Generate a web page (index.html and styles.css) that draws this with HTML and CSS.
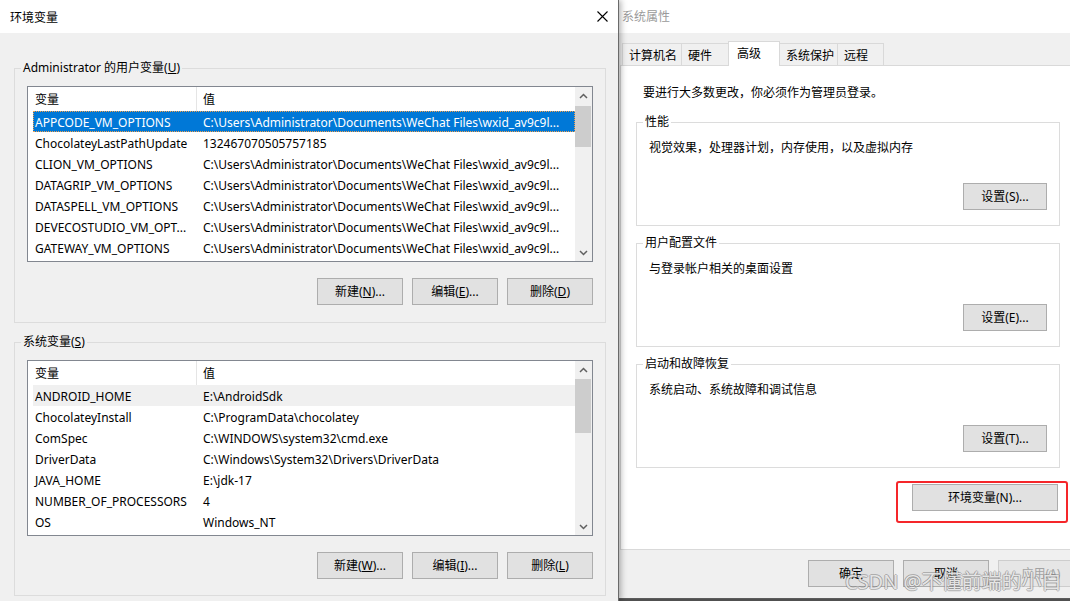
FILE: index.html
```html
<!DOCTYPE html>
<html>
<head>
    <meta charset="utf-8">
    <title>环境变量</title>
    <link rel="stylesheet" href="styles.css">
</head>
<body>
<div class="desktop">
    <div class="dialog env">
        <div class="titlebar">
            <span class="title">环境变量</span>
            <svg class="close-icon" width="11" height="11" viewBox="0 0 11 11"><path d="M0.5 0.5 L10.5 10.5 M10.5 0.5 L0.5 10.5" stroke="#000" stroke-width="1.1" fill="none"/></svg>
        </div>
        <div class="env-body">
            <fieldset class="group">
                <legend>Administrator 的用户变量(<u>U</u>)</legend>
                <div class="listview">
                    <div class="list-rows">
                        <div class="list-head"><span class="col-name">变量</span><span class="col-value">值</span></div>
                        <div class="list-row selected"><span class="col-name">APPCODE_VM_OPTIONS</span><span class="col-value">C:\Users\Administrator\Documents\WeChat Files\wxid_av9c9l...</span></div>
                        <div class="list-row"><span class="col-name">ChocolateyLastPathUpdate</span><span class="col-value">132467070505757185</span></div>
                        <div class="list-row"><span class="col-name">CLION_VM_OPTIONS</span><span class="col-value">C:\Users\Administrator\Documents\WeChat Files\wxid_av9c9l...</span></div>
                        <div class="list-row"><span class="col-name">DATAGRIP_VM_OPTIONS</span><span class="col-value">C:\Users\Administrator\Documents\WeChat Files\wxid_av9c9l...</span></div>
                        <div class="list-row"><span class="col-name">DATASPELL_VM_OPTIONS</span><span class="col-value">C:\Users\Administrator\Documents\WeChat Files\wxid_av9c9l...</span></div>
                        <div class="list-row"><span class="col-name">DEVECOSTUDIO_VM_OPT...</span><span class="col-value">C:\Users\Administrator\Documents\WeChat Files\wxid_av9c9l...</span></div>
                        <div class="list-row"><span class="col-name">GATEWAY_VM_OPTIONS</span><span class="col-value">C:\Users\Administrator\Documents\WeChat Files\wxid_av9c9l...</span></div>
                    </div>
                    <div class="scrollbar">
                        <div class="arrow"><svg width="9" height="6" viewBox="0 0 9 6"><path d="M1 5 L4.5 1.5 L8 5" fill="none" stroke="#606060" stroke-width="1.5"/></svg></div>
                        <div class="track"><div class="thumb thumb-user"></div></div>
                        <div class="arrow"><svg width="9" height="6" viewBox="0 0 9 6"><path d="M1 1 L4.5 4.5 L8 1" fill="none" stroke="#606060" stroke-width="1.5"/></svg></div>
                    </div>
                </div>
                <div class="btn-row">
                    <button class="btn">新建(<u>N</u>)...</button>
                    <button class="btn">编辑(<u>E</u>)...</button>
                    <button class="btn">删除(<u>D</u>)</button>
                </div>
            </fieldset>

            <fieldset class="group sys-vars">
                <legend>系统变量(<u>S</u>)</legend>
                <div class="listview">
                    <div class="list-rows">
                        <div class="list-head"><span class="col-name">变量</span><span class="col-value">值</span></div>
                        <div class="list-row hover"><span class="col-name">ANDROID_HOME</span><span class="col-value">E:\AndroidSdk</span></div>
                        <div class="list-row"><span class="col-name">ChocolateyInstall</span><span class="col-value">C:\ProgramData\chocolatey</span></div>
                        <div class="list-row"><span class="col-name">ComSpec</span><span class="col-value">C:\WINDOWS\system32\cmd.exe</span></div>
                        <div class="list-row"><span class="col-name">DriverData</span><span class="col-value">C:\Windows\System32\Drivers\DriverData</span></div>
                        <div class="list-row"><span class="col-name">JAVA_HOME</span><span class="col-value">E:\jdk-17</span></div>
                        <div class="list-row"><span class="col-name">NUMBER_OF_PROCESSORS</span><span class="col-value">4</span></div>
                        <div class="list-row"><span class="col-name">OS</span><span class="col-value">Windows_NT</span></div>
                    </div>
                    <div class="scrollbar">
                        <div class="arrow"><svg width="9" height="6" viewBox="0 0 9 6"><path d="M1 5 L4.5 1.5 L8 5" fill="none" stroke="#606060" stroke-width="1.5"/></svg></div>
                        <div class="track"><div class="thumb thumb-sys"></div></div>
                        <div class="arrow"><svg width="9" height="6" viewBox="0 0 9 6"><path d="M1 1 L4.5 4.5 L8 1" fill="none" stroke="#606060" stroke-width="1.5"/></svg></div>
                    </div>
                </div>
                <div class="btn-row">
                    <button class="btn">新建(<u>W</u>)...</button>
                    <button class="btn">编辑(<u>I</u>)...</button>
                    <button class="btn">删除(<u>L</u>)</button>
                </div>
            </fieldset>
        </div>
    </div>

    <div class="dialog sys">
        <div class="titlebar">
            <span class="title">系统属性</span>
        </div>
        <div class="tabs">
            <div class="tab tab-name">计算机名</div>
            <div class="tab tab-hw">硬件</div>
            <div class="tab tab-adv active">高级</div>
            <div class="tab tab-protect">系统保护</div>
            <div class="tab tab-remote">远程</div>
        </div>
        <div class="tab-panel">
            <p class="note">要进行大多数更改，你必须作为管理员登录。</p>
            <fieldset class="group prop-group">
                <legend>性能</legend>
                <p class="desc">视觉效果，处理器计划，内存使用，以及虚拟内存</p>
                <div class="btn-row"><button class="btn btn-small">设置(S)...</button></div>
            </fieldset>
            <fieldset class="group prop-group">
                <legend>用户配置文件</legend>
                <p class="desc">与登录帐户相关的桌面设置</p>
                <div class="btn-row"><button class="btn btn-small">设置(E)...</button></div>
            </fieldset>
            <fieldset class="group prop-group">
                <legend>启动和故障恢复</legend>
                <p class="desc">系统启动、系统故障和调试信息</p>
                <div class="btn-row"><button class="btn btn-small">设置(T)...</button></div>
            </fieldset>
            <div class="env-row">
                <div class="mark">
                    <button class="btn btn-wide">环境变量(N)...</button>
                </div>
            </div>
        </div>
        <div class="dialog-buttons">
            <button class="btn">确定</button>
            <button class="btn">取消</button>
            <button class="btn" disabled>应用(A)</button>
        </div>
        <div class="watermark">CSDN @不懂前端的小白</div>
    </div>
</div>
</body>
</html>
```

FILE: styles.css
```css
* {
    box-sizing: border-box;
}
body {
    margin: 0;
    width: 1070px;
    height: 601px;
    overflow: hidden;
    background: #505050;
    font-family: "Noto Sans", "Noto Sans CJK SC", sans-serif;
    font-size: 12px;
    line-height: 16px;
    color: #000;
}
.desktop {
    display: flex;
    height: 601px;
}
.dialog {
    flex-shrink: 0;
    background: #f0f0f0;
}
.titlebar {
    height: 33px;
    padding-top: 1px;
    background: #fff;
    display: flex;
    align-items: center;
    justify-content: space-between;
}

/* left window: 环境变量 */
.env {
    position: relative;
    z-index: 2;
    width: 619px;
    height: 601px;
    border-right: 1px solid #6a6a6a;
    box-shadow: 2px 0 6px rgba(0, 0, 0, 0.3);
}
.env .titlebar {
    padding: 0 10px;
}
.env .title {
    padding-top: 2px;
}
.env-body {
    padding: 27px 12px 0 14px;
}
.group {
    margin: 0;
    min-width: 0;
    border: 1px solid #dcdcdc;
    padding: 10px 12px 17px;
}
.group legend {
    margin-left: -6px;
    padding: 0 2px;
    line-height: 16px;
}
.sys-vars {
    margin-top: 11px;
    padding-bottom: 16px;
}
.listview {
    display: flex;
    height: 176px;
    border: 1px solid #828790;
    background: #fff;
}
.list-rows {
    flex: 1;
    min-width: 0;
    padding-left: 5px;
    overflow: hidden;
}
.list-head {
    display: flex;
    height: 24px;
    line-height: 24px;
}
.list-head span {
    padding-top: 1px;
}
.list-row {
    display: flex;
    height: 21px;
    line-height: 21px;
}
.list-row span {
    padding-top: 1px;
}
.col-name {
    flex-shrink: 0;
    width: 164px;
    padding-left: 2px;
    white-space: nowrap;
    overflow: hidden;
}
.list-head .col-name {
    border-right: 1px solid #e5e5e5;
}
.col-value {
    flex: 1;
    min-width: 0;
    padding-left: 6px;
    white-space: nowrap;
    overflow: hidden;
}
.list-row.selected {
    background: #0078d7;
    color: #fff;
    outline: 1px dotted #f3a04c;
    outline-offset: -1px;
}
.list-row.hover {
    background: #f0f0f0;
}
.scrollbar {
    width: 17px;
    display: flex;
    flex-direction: column;
    background: #f0f0f0;
}
.arrow {
    height: 17px;
    display: flex;
    align-items: center;
    justify-content: center;
}
.track {
    flex: 1;
}
.thumb {
    margin-right: 1px;
    background: #cdcdcd;
}
.thumb-user {
    margin-top: 2px;
    height: 41px;
}
.thumb-sys {
    margin-top: 1px;
    height: 54px;
}
.btn-row {
    display: flex;
    justify-content: flex-end;
    gap: 9px;
    margin-top: 16px;
}
.btn {
    width: 86px;
    height: 27px;
    padding: 1px 0 0;
    background: #e1e1e1;
    border: 1px solid #adadad;
    font: inherit;
    color: #000;
}
.btn:disabled {
    background: #e6e6e6;
    border-color: #cdcdcd;
    color: #a3a3a3;
}

/* right window: 系统属性 */
.sys {
    position: relative;
    width: 470px;
    height: 599px;
    border-bottom: 1px solid #5c5c5c;
}
.sys .titlebar {
    padding-left: 3px;
}
.sys .title {
    color: #9a9a9a;
}
.tabs {
    display: flex;
    align-items: flex-start;
    height: 32px;
    padding: 10px 0 0 3px;
}
.tab {
    height: 22px;
    line-height: 21px;
    padding: 1px 0 0 6px;
    margin-right: -1px;
    border: 1px solid #d9d9d9;
    border-bottom: 0;
    white-space: nowrap;
}
.tab-name { width: 60px; }
.tab-hw { width: 48px; }
.tab-adv { width: 52px; }
.tab-protect { width: 59px; }
.tab-remote { width: 47px; }
.tab.active {
    position: relative;
    z-index: 1;
    height: 25px;
    margin-top: -2px;
    padding-left: 8px;
    background: #fff;
}
.tab-panel {
    display: flex;
    flex-direction: column;
    width: 456px;
    height: 485px;
    margin-left: 1px;
    padding: 19px 15px 0;
    background: #fff;
    border: 1px solid #d9d9d9;
}
.note {
    margin: 0 0 13px 7px;
}
.prop-group {
    padding: 10px 12px 15px;
}
.prop-group + .prop-group {
    margin-top: 9px;
}
.desc {
    margin: 0;
}
.prop-group .btn-row {
    margin-top: 27px;
}
.btn-small {
    width: 84px;
}
.env-row {
    display: flex;
    justify-content: flex-end;
    margin: 13px -8px 0 0;
}
.mark {
    padding: 1px 8px 10px 14px;
    border: 2px solid #f5262a;
    border-radius: 3px;
}
.btn-wide {
    width: 146px;
}
.dialog-buttons {
    display: flex;
    gap: 9px;
    padding: 10px 0 0 189px;
}
.watermark {
    position: absolute;
    left: 226px;
    top: 570px;
    font-size: 20px;
    line-height: 24px;
    white-space: nowrap;
    color: rgba(255, 255, 255, 0.8);
    text-shadow: 1px 0 0 rgba(110, 110, 110, 0.45), -1px 0 0 rgba(110, 110, 110, 0.45),
        0 1px 0 rgba(110, 110, 110, 0.45), 0 -1px 0 rgba(110, 110, 110, 0.45);
}
```
